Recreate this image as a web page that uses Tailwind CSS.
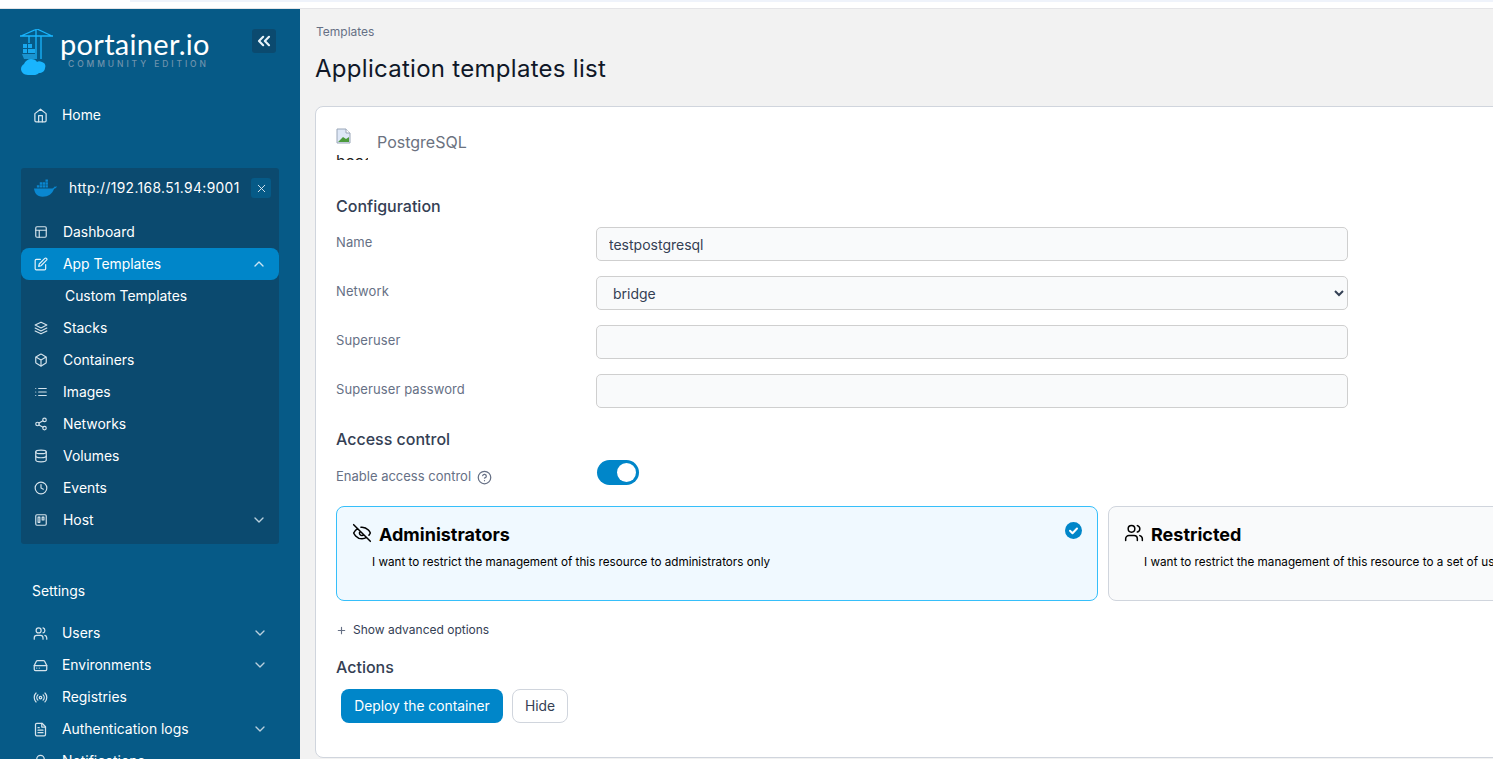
<!DOCTYPE html>
<html lang="en">
 <head>
  <meta charset="utf-8"/>
  <meta content="width=device-width, initial-scale=1.0" name="viewport"/>
  <title>Portainer - Application templates list</title>
  <script src="https://cdn.jsdelivr.net/npm/@tailwindcss/browser@4"></script>
 </head>
 <body class="h-screen overflow-hidden bg-white font-['Inter',sans-serif]">
  <!-- browser strip above the app -->
  <div class="h-[9px] border-b border-[#e4e4e7] bg-white">
    <div class="ml-[130px] h-[2px] bg-[#eff3fb]"></div>
  </div>
  <div class="flex h-[750px] overflow-hidden">
   <aside class="w-[300px] shrink-0 bg-[#065a87] text-[13.900px] leading-[20px] text-white">
    <!-- logo -->
    <div class="flex h-[90px] items-start pt-[20px] pl-[20px]">
      <svg class="h-[46px] w-[33px] shrink-0" viewBox="0 0 33 46" fill="none">
        <path d="M0 7H33M17 0L1 7M17 0L32 7M16 0V30M21 7V30M9 7V14" stroke="#19b5fe" stroke-width="1.300"/>
        <path d="M3 15h4v4H3zM8 15h4v4H8zM3 20h4v4H3zM8 20h4v4H8zM12 20h3v4h-3z" fill="#19a8ee"/>
        <path d="M2 25h13v5H4z" fill="#1b93cf"/>
        <path d="M8 46c-4 0-7-3-7-6 0-2 1-4 3-5 1-3 4-5 7-5 3 0 5 1 6 3 1-1 3-1 5 0 3 1 4 3 3 6 0 3-3 5-6 5-2 2-6 3-11 2z" fill="#19b5fe"/>
      </svg>
      <div class="ml-[7px] w-[192px] shrink-0">
        <div class="font-['Lato',sans-serif] text-[29px] leading-[30px] tracking-[0.3px]">portainer.io</div>
        <div class="ml-[8px] text-[8.500px] leading-[10px] font-medium tracking-[2.900px] text-[#6f93ad]">COMMUNITY EDITION</div>
      </div>
      <div class="flex h-[24px] w-[24px] shrink-0 items-center justify-center rounded-[3px] bg-[#0b4a6f]">
        <svg class="h-[20px] w-[20px]" viewBox="0 0 24 24" fill="none" stroke="#e6f2f9" stroke-width="2.600" stroke-linecap="round" stroke-linejoin="round"><path d="m11 17-5-5 5-5M18 17l-5-5 5-5"/></svg>
      </div>
    </div>
    <!-- home -->
    <a class="flex h-8 items-center pl-[33px]">
      <svg class="mr-[14px] h-[15px] w-[15px] text-[#d5e3ec]" viewBox="0 0 24 24" fill="none" stroke="currentColor" stroke-width="2" stroke-linecap="round" stroke-linejoin="round"><path d="m3 9 9-7 9 7v11a2 2 0 0 1-2 2H5a2 2 0 0 1-2-2z"/><path d="M9 22V12h6v10"/></svg>
      Home
    </a>
    <!-- environment panel -->
    <div class="mx-[21px] mt-[37px] h-[376px] rounded-[3px] bg-[#0b4a6f]">
      <div class="flex h-[48px] items-start pt-[10px] pl-[13px]">
        <svg class="mt-[1px] h-[18px] w-[23px] shrink-0" viewBox="0 0 24 18" fill="#0a87d0"><path d="M0 9.500h19c1 0 2-1 2.500-2 .8.300 1.800.200 2.500-.300-.5 1.500-1.800 2.300-3 2.500C19 15 15 18 9 18 3 18 .5 14 0 9.500z"/><path d="M3 6h2.500v2.500H3zM6 6h2.500v2.500H6zM9 6h2.500v2.500H9zM12 6h2.500v2.500H12zM6 3h2.500v2.500H6zM9 3h2.500v2.500H9zM12 3h2.500v2.500H12zM12 0h2.500v2.500H12z"/></svg>
        <span class="ml-[12px] w-[182px] shrink-0 text-[13.800px] leading-[20px] tracking-[0.36px] whitespace-nowrap">http://192.168.51.94:9001</span>
        <span class="flex h-[20px] w-[20px] shrink-0 items-center justify-center rounded-[3px] bg-[#065a87]">
          <svg class="h-[13px] w-[13px]" viewBox="0 0 24 24" fill="none" stroke="#d5e3ec" stroke-width="1.800" stroke-linecap="round"><path d="M18 6 6 18M6 6l12 12"/></svg>
        </span>
      </div>
      <a class="flex h-8 items-center pl-[13px]">
        <svg class="mr-[15px] h-[14px] w-[14px] text-[#d5e3ec]" viewBox="0 0 24 24" fill="none" stroke="currentColor" stroke-width="2" stroke-linecap="round" stroke-linejoin="round"><rect x="3" y="3" width="18" height="18" rx="2"/><path d="M3 9h18M9 21V9"/></svg>
        Dashboard
      </a>
      <a class="flex h-8 items-center rounded-[8px] bg-[#0086c9] pl-[13px]">
        <svg class="mr-[15px] h-[14px] w-[14px] text-[#e6f2f9]" viewBox="0 0 24 24" fill="none" stroke="currentColor" stroke-width="2" stroke-linecap="round" stroke-linejoin="round"><path d="M11 4H4a2 2 0 0 0-2 2v14a2 2 0 0 0 2 2h14a2 2 0 0 0 2-2v-7"/><path d="M18.500 2.500a2.121 2.121 0 0 1 3 3L12 15l-4 1 1-4z"/></svg>
        App Templates
        <svg class="mr-[12px] ml-auto h-[16px] w-[16px] text-[#c9e4f3]" viewBox="0 0 24 24" fill="none" stroke="currentColor" stroke-width="2" stroke-linecap="round" stroke-linejoin="round"><path d="m18 15-6-6-6 6"/></svg>
      </a>
      <a class="flex h-8 items-center pl-[44px]">Custom Templates</a>
      <a class="flex h-8 items-center pl-[13px]">
        <svg class="mr-[15px] h-[14px] w-[14px] text-[#d5e3ec]" viewBox="0 0 24 24" fill="none" stroke="currentColor" stroke-width="2" stroke-linecap="round" stroke-linejoin="round"><path d="M12 2 2 7l10 5 10-5z"/><path d="m2 17 10 5 10-5M2 12l10 5 10-5"/></svg>
        Stacks
      </a>
      <a class="flex h-8 items-center pl-[13px]">
        <svg class="mr-[15px] h-[14px] w-[14px] text-[#d5e3ec]" viewBox="0 0 24 24" fill="none" stroke="currentColor" stroke-width="2" stroke-linecap="round" stroke-linejoin="round"><path d="M21 16V8a2 2 0 0 0-1-1.730l-7-4a2 2 0 0 0-2 0l-7 4A2 2 0 0 0 3 8v8a2 2 0 0 0 1 1.730l7 4a2 2 0 0 0 2 0l7-4A2 2 0 0 0 21 16z"/><path d="M3.270 6.960 12 12.010l8.730-5.050M12 22.080V12"/></svg>
        Containers
      </a>
      <a class="flex h-8 items-center pl-[13px]">
        <svg class="mr-[15px] h-[14px] w-[14px] text-[#d5e3ec]" viewBox="0 0 24 24" fill="none" stroke="currentColor" stroke-width="2" stroke-linecap="round" stroke-linejoin="round"><path d="M8 6h13M8 12h13M8 18h13M3 6h.010M3 12h.010M3 18h.010"/></svg>
        Images
      </a>
      <a class="flex h-8 items-center pl-[13px]">
        <svg class="mr-[15px] h-[14px] w-[14px] text-[#d5e3ec]" viewBox="0 0 24 24" fill="none" stroke="currentColor" stroke-width="2" stroke-linecap="round" stroke-linejoin="round"><circle cx="18" cy="5" r="3"/><circle cx="6" cy="12" r="3"/><circle cx="18" cy="19" r="3"/><path d="m8.590 13.510 6.830 3.980M15.410 6.510l-6.820 3.980"/></svg>
        Networks
      </a>
      <a class="flex h-8 items-center pl-[13px]">
        <svg class="mr-[15px] h-[14px] w-[14px] text-[#d5e3ec]" viewBox="0 0 24 24" fill="none" stroke="currentColor" stroke-width="2" stroke-linecap="round" stroke-linejoin="round"><ellipse cx="12" cy="5" rx="9" ry="3"/><path d="M21 12c0 1.660-4 3-9 3s-9-1.340-9-3"/><path d="M3 5v14c0 1.660 4 3 9 3s9-1.340 9-3V5"/></svg>
        Volumes
      </a>
      <a class="flex h-8 items-center pl-[13px]">
        <svg class="mr-[15px] h-[14px] w-[14px] text-[#d5e3ec]" viewBox="0 0 24 24" fill="none" stroke="currentColor" stroke-width="2" stroke-linecap="round" stroke-linejoin="round"><circle cx="12" cy="12" r="10"/><path d="M12 6v6l4 2"/></svg>
        Events
      </a>
      <a class="flex h-8 items-center pl-[13px]">
        <svg class="mr-[15px] h-[14px] w-[14px] text-[#d5e3ec]" viewBox="0 0 24 24" fill="none" stroke="currentColor" stroke-width="2" stroke-linecap="round" stroke-linejoin="round"><rect x="3" y="3" width="18" height="18" rx="2"/><path d="M7 7h3v9H7zM14 7h3v5h-3z"/></svg>
        Host
        <svg class="mr-[12px] ml-auto h-[16px] w-[16px] text-[#b9d0de]" viewBox="0 0 24 24" fill="none" stroke="currentColor" stroke-width="2" stroke-linecap="round" stroke-linejoin="round"><path d="m6 9 6 6 6-6"/></svg>
      </a>
    </div>
    <!-- settings -->
    <div class="flex h-[32px] items-center pl-[32px] mt-[31px]">Settings</div>
    <div class="mt-[10px]">
      <a class="flex h-8 items-center pl-[33px]">
        <svg class="mr-[14px] h-[15px] w-[15px] text-[#d5e3ec]" viewBox="0 0 24 24" fill="none" stroke="currentColor" stroke-width="2" stroke-linecap="round" stroke-linejoin="round"><path d="M16 21v-2a4 4 0 0 0-4-4H6a4 4 0 0 0-4 4v2"/><circle cx="9" cy="7" r="4"/><path d="M22 21v-2a4 4 0 0 0-3-3.870M16 3.130a4 4 0 0 1 0 7.750"/></svg>
        Users
        <svg class="mr-[32px] ml-auto h-[16px] w-[16px] text-[#b9d0de]" viewBox="0 0 24 24" fill="none" stroke="currentColor" stroke-width="2" stroke-linecap="round" stroke-linejoin="round"><path d="m6 9 6 6 6-6"/></svg>
      </a>
      <a class="flex h-8 items-center pl-[33px]">
        <svg class="mr-[14px] h-[15px] w-[15px] text-[#d5e3ec]" viewBox="0 0 24 24" fill="none" stroke="currentColor" stroke-width="2" stroke-linecap="round" stroke-linejoin="round"><path d="M22 12H2"/><path d="M5.450 5.110 2 12v6a2 2 0 0 0 2 2h16a2 2 0 0 0 2-2v-6l-3.450-6.890A2 2 0 0 0 16.760 4H7.240a2 2 0 0 0-1.790 1.110z"/><path d="M6 16h.010M10 16h.010"/></svg>
        Environments
        <svg class="mr-[32px] ml-auto h-[16px] w-[16px] text-[#b9d0de]" viewBox="0 0 24 24" fill="none" stroke="currentColor" stroke-width="2" stroke-linecap="round" stroke-linejoin="round"><path d="m6 9 6 6 6-6"/></svg>
      </a>
      <a class="flex h-8 items-center pl-[33px]">
        <svg class="mr-[14px] h-[15px] w-[15px] text-[#d5e3ec]" viewBox="0 0 24 24" fill="none" stroke="currentColor" stroke-width="2" stroke-linecap="round" stroke-linejoin="round"><path d="M4.900 19.100C1 15.200 1 8.800 4.900 4.900M7.800 16.200c-2.300-2.300-2.300-6.100 0-8.500M16.200 7.800c2.300 2.300 2.300 6.100 0 8.500M19.100 4.900C23 8.800 23 15.100 19.100 19"/><circle cx="12" cy="12" r="2"/></svg>
        Registries
      </a>
      <a class="flex h-8 items-center pl-[33px]">
        <svg class="mr-[14px] h-[15px] w-[15px] text-[#d5e3ec]" viewBox="0 0 24 24" fill="none" stroke="currentColor" stroke-width="2" stroke-linecap="round" stroke-linejoin="round"><path d="M14.500 2H6a2 2 0 0 0-2 2v16a2 2 0 0 0 2 2h12a2 2 0 0 0 2-2V7.500z"/><path d="M14 2v6h6M16 13H8M16 17H8M10 9H8"/></svg>
        Authentication logs
        <svg class="mr-[32px] ml-auto h-[16px] w-[16px] text-[#b9d0de]" viewBox="0 0 24 24" fill="none" stroke="currentColor" stroke-width="2" stroke-linecap="round" stroke-linejoin="round"><path d="m6 9 6 6 6-6"/></svg>
      </a>
      <a class="flex h-8 items-center pl-[33px]">
        <svg class="mr-[14px] h-[15px] w-[15px] text-[#d5e3ec]" viewBox="0 0 24 24" fill="none" stroke="currentColor" stroke-width="2" stroke-linecap="round" stroke-linejoin="round"><path d="M18 8A6 6 0 0 0 6 8c0 7-3 9-3 9h18s-3-2-3-9"/><path d="M13.730 21a2 2 0 0 1-3.460 0"/></svg>
        Notifications
      </a>
    </div>
   </aside>

   <main class="min-w-0 flex-1 overflow-hidden bg-[#f2f2f2] pl-[15px]">
    <div class="pt-[15px] pl-[1px] text-[12px] leading-[16px] text-[#667085]">Templates</div>
    <h1 class="mt-[15px] text-[24px] leading-[28px] font-normal tracking-[0.28px] text-[#101828]">Application templates list</h1>
    <section class="mt-[23px] h-[652px] w-[1400px] rounded-[8px] border border-[#d0d5dd] bg-white pt-[21px] pl-[20px]">
      <div class="flex h-[32px] items-center">
        <div class="relative h-[32px] w-[32px] shrink-0 overflow-hidden text-[16px] leading-[18px] text-[#222]">
          <svg class="block h-[16px] w-[16px]" viewBox="0 0 16 16"><path d="M1 1h9l4 4v10H1z" fill="#dfe8f7" stroke="#9aa6b8"/><path d="M2 14l5-5 3 2 3-2v5z" fill="#4c9a3c"/><path d="M10 1v4h4" fill="#fff" stroke="#9aa6b8"/></svg>
          <span class="block pt-[8px]">heading</span>
        </div>
        <span class="mb-[4px] ml-[9px] text-[16px] text-[#6b7280]">PostgreSQL</span>
      </div>
      <h2 class="mt-[36px] text-[16px] leading-[20px] font-medium text-[#344054]">Configuration</h2>

      <div class="mt-[11px] flex h-[34px] items-center">
        <label class="mb-[2px] w-[260px] shrink-0 text-[13px] tracking-[0.1px] text-[#667085]">Name</label>
        <input class="h-[34px] w-[752px] rounded-[5px] border border-[#cfcfcf] bg-[#f9fafb] px-[12px] text-[14px] text-[#344054]" value="testpostgresql"/>
      </div>
      <div class="mt-[15px] flex h-[34px] items-center">
        <label class="mb-[2px] w-[260px] shrink-0 text-[13px] tracking-[0.1px] text-[#667085]">Network</label>
        <select class="h-[34px] w-[752px] rounded-[5px] border border-[#cfcfcf] bg-[#f9fafb] px-[12px] text-[14px] text-[#344054]"><option>bridge</option></select>
      </div>
      <div class="mt-[15px] flex h-[34px] items-center">
        <label class="mb-[2px] w-[260px] shrink-0 text-[13px] tracking-[0.1px] text-[#667085]">Superuser</label>
        <input class="h-[34px] w-[752px] rounded-[5px] border border-[#cfcfcf] bg-[#f9fafb] px-[12px] text-[14px] text-[#344054]"/>
      </div>
      <div class="mt-[15px] flex h-[34px] items-center">
        <label class="mb-[2px] w-[260px] shrink-0 text-[13px] tracking-[0.1px] text-[#667085]">Superuser password</label>
        <input type="password" class="h-[34px] w-[752px] rounded-[5px] border border-[#cfcfcf] bg-[#f9fafb] px-[12px] text-[14px] text-[#344054]"/>
      </div>

      <h2 class="mt-[21px] text-[16px] leading-[20px] font-medium text-[#344054]">Access control</h2>
      <div class="mt-[11px] flex h-[25px] items-center">
        <label class="flex w-[261px] shrink-0 items-center pt-[9px] text-[13px] text-[#667085]">
          Enable access control
          <svg class="ml-[6px] h-[15px] w-[15px]" viewBox="0 0 24 24" fill="none" stroke="currentColor" stroke-width="2" stroke-linecap="round" stroke-linejoin="round"><circle cx="12" cy="12" r="10"/><path d="M9.090 9a3 3 0 0 1 5.830 1c0 2-3 3-3 3M12 17h.010"/></svg>
        </label>
        <span class="flex h-[25px] w-[42px] items-center justify-end rounded-full bg-[#0086c9] pr-[3px]">
          <span class="h-[19px] w-[19px] rounded-full bg-white"></span>
        </span>
      </div>

      <div class="mt-[21px] flex gap-[10px]">
        <div class="relative h-[95px] w-[762px] shrink-0 rounded-[8px] border border-[#36bffa] bg-[#f0f9ff] pt-[16px] pl-[15px] text-black">
          <div class="flex items-center">
            <svg class="-mt-[4px] h-[20px] w-[20px]" viewBox="0 0 24 24" fill="none" stroke="currentColor" stroke-width="1.800" stroke-linecap="round" stroke-linejoin="round"><path d="M9.880 9.880a3 3 0 1 0 4.240 4.240M10.730 5.080A10.430 10.430 0 0 1 12 5c7 0 10 7 10 7a13.160 13.160 0 0 1-1.670 2.680M6.610 6.610A13.530 13.530 0 0 0 2 12s3 7 10 7a9.740 9.740 0 0 0 5.390-1.610M2 2l20 20"/></svg>
            <span class="ml-[7px] text-[18px] leading-[24px] font-bold">Administrators</span>
          </div>
          <p class="mt-[7px] ml-[20px] text-[11.700px] leading-[16px]">I want to restrict the management of this resource to administrators only</p>
          <svg class="absolute top-[15px] right-[15px] h-[17px] w-[17px]" viewBox="0 0 17 17"><circle cx="8.500" cy="8.500" r="8.500" fill="#0086c9"/><path d="m5 8.700 2.500 2.500L12 6.500" fill="none" stroke="#fff" stroke-width="2" stroke-linecap="round" stroke-linejoin="round"/></svg>
        </div>
        <div class="h-[95px] w-[762px] shrink-0 rounded-[8px] border border-[#d0d5dd] bg-[#f9fafb] pt-[16px] pl-[15px] text-black">
          <div class="flex items-center">
            <svg class="-mt-[4px] h-[20px] w-[20px]" viewBox="0 0 24 24" fill="none" stroke="currentColor" stroke-width="1.800" stroke-linecap="round" stroke-linejoin="round"><path d="M16 21v-2a4 4 0 0 0-4-4H6a4 4 0 0 0-4 4v2"/><circle cx="9" cy="7" r="4"/><path d="M22 21v-2a4 4 0 0 0-3-3.870M16 3.130a4 4 0 0 1 0 7.750"/></svg>
            <span class="ml-[7px] text-[18px] leading-[24px] font-bold">Restricted</span>
          </div>
          <p class="mt-[7px] ml-[20px] text-[11.700px] leading-[16px]">I want to restrict the management of this resource to a set of users and/or teams</p>
        </div>
      </div>

      <div class="mt-[20px] flex h-[18px] items-center text-[12px] text-[#344054]">
        <svg class="mr-[6px] h-[11px] w-[11px] text-[#667085]" viewBox="0 0 24 24" fill="none" stroke="currentColor" stroke-width="2.500" stroke-linecap="round"><path d="M12 5v14M5 12h14"/></svg>
        Show advanced options
      </div>
      <h2 class="mt-[18px] text-[16px] leading-[20px] font-medium text-[#344054]">Actions</h2>
      <div class="mt-[12px] flex items-center gap-[9px] pl-[5px]">
        <button class="h-[34px] w-[162px] rounded-[8px] bg-[#0086c9] text-[13.800px] text-white">Deploy the container</button>
        <button class="h-[34px] w-[56px] rounded-[8px] border border-[#d0d5dd] bg-white text-[13.800px] text-[#344054]">Hide</button>
      </div>
    </section>
   </main>
  </div>
 </body>
</html>
